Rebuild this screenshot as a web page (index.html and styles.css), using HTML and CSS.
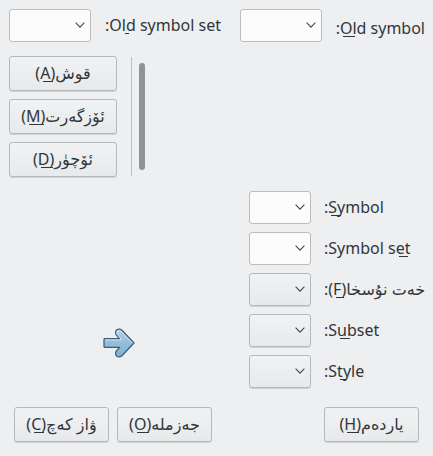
FILE: index.html
```
<!DOCTYPE html>
<html lang="ug">
<head>
<meta charset="utf-8">
<title>Symbol</title>
<link rel="stylesheet" href="styles.css">
</head>
<body>
<svg class="defs" width="0" height="0"><symbol id="chev" viewBox="0 0 10 6"><path d="M.6.7 5 5.1 9.4.7" fill="none" stroke="#42474b" stroke-width="1.1"/></symbol></svg>
<main class="dialog">
  <header class="old">
    <div class="combo wide"><svg><use href="#chev"/></svg></div>
    <label class="set" dir="rtl">O<u>l</u>d symbol set:</label>
    <div class="combo wide"><svg><use href="#chev"/></svg></div>
    <label class="sym" dir="rtl"><u>O</u>ld symbol:</label>
  </header>
  <section class="middle">
    <div class="left">
      <div class="edit">
        <div class="buttons">
          <button dir="rtl">قوش(<u>A</u>)</button>
          <button dir="rtl">ئۆزگەرت(<u>M</u>)</button>
          <button dir="rtl">ئۆچۈر(<u>D</u>)</button>
        </div>
        <div class="rule"></div>
        <div class="scroll"></div>
      </div>
      <svg class="arrow" viewBox="0 0 32 30">
        <defs><linearGradient id="blue" x1="0" y1="0" x2="0" y2="1"><stop offset="0" stop-color="#b9d3e8"/><stop offset=".5" stop-color="#94bddb"/><stop offset="1" stop-color="#80afd2"/></linearGradient></defs>
        <path d="M1.700 10.700H16.500L13 6.500Q11.800 3.500 13.800 1.800Q16.300.3 18.700 2L31 15 18.700 28Q16.300 29.700 13.800 28.200Q11.800 26.500 13 23.500L16.500 19.300H1.700Q1 19.300 1 18.500V11.500Q1 10.700 1.700 10.700Z" fill="url(#blue)" stroke="#3c5a74" stroke-width="1.200" stroke-linejoin="round"/>
        <path d="M2.200 11.900H18.500L14.200 6.300Q13.300 4 14.600 2.900Q16.500 1.900 18 3.100L29.300 15" fill="none" stroke="#d3e3f0" stroke-width=".9"/>
      </svg>
    </div>
    <div class="form">
      <div class="combo"><svg><use href="#chev"/></svg></div><label dir="rtl"><u>S</u>ymbol:</label>
      <div class="combo"><svg><use href="#chev"/></svg></div><label dir="rtl">Symbol s<u>e</u>t:</label>
      <div class="combo list"><svg><use href="#chev"/></svg></div><label dir="rtl">خەت نۇسخا(<u>F</u>):</label>
      <div class="combo list"><svg><use href="#chev"/></svg></div><label dir="rtl">S<u>u</u>bset:</label>
      <div class="combo list"><svg><use href="#chev"/></svg></div><label dir="rtl">S<u>t</u>yle:</label>
    </div>
  </section>
  <footer class="actions">
    <button dir="rtl">ۋاز كەچ(<u>C</u>)</button>
    <button dir="rtl">جەزملە(<u>O</u>)</button>
    <button class="help" dir="rtl">ياردەم(<u>H</u>)</button>
  </footer>
</main>
</body>
</html>
```
FILE: styles.css
```
* { box-sizing: border-box; }
body { margin: 0; background: #eff0f1; color: #31363b; font: 16px/22px "Noto Sans", "DejaVu Sans", sans-serif; }
.defs { display: block; }
.dialog { width: 433px; height: 456px; background: #eeeff1; overflow: hidden; }
.old { display: flex; padding: 9px 8px 0 9px; height: 56px; }
label { white-space: nowrap; text-align: left; }
.set { width: 121px; margin: 5px 14px 0; }
.sym { margin: 8px 0 0 14px; }
.old .set { margin-right: 15px; }
.combo { width: 62px; height: 33px; border: 1px solid #bbbdbf; border-radius: 3px; background: #fcfcfc; display: flex; align-items: center; justify-content: flex-end; padding: 0 5px 2px 0; }
.wide { width: 82px; flex: none; }
.combo svg { width: 10px; height: 6px; }
.list, button { background: linear-gradient(#f1f2f3, #e8e9ea); border: 1px solid #b6b8ba; box-shadow: 0 1px 0 #cfd1d3; }
button { border-radius: 3px; height: 35px; color: inherit; font: inherit; padding: 0 0 2px; white-space: nowrap; }
u { position: relative; text-decoration: none; }
u::after { content: ""; position: absolute; left: 3px; bottom: 2px; width: 100%; height: 1px; background: #31363b; }
.middle { display: flex; height: 351px; }
.left { width: 249px; padding-left: 9px; }
.edit { display: flex; height: 121px; }
.buttons { width: 108px; display: grid; grid-auto-rows: 35px; row-gap: 8px; }
.rule { width: 1px; height: 119px; margin: 1px 7px 0 14px; background: #bdbfc1; }
.scroll { width: 6px; height: 107px; margin-top: 7px; border-radius: 3px; background: #909396; }
.arrow { display: block; width: 32px; height: 30px; margin: 151px 0 0 94px; }
.form { display: grid; grid-template-columns: 62px auto; grid-auto-rows: 33px; gap: 8px 13px; padding-top: 135px; align-content: start; }
.form label { padding-top: 5px; }
.actions { display: flex; gap: 8px; padding: 0 14px; }
.actions button { width: 95px; }
.help { margin-left: auto; }
```
